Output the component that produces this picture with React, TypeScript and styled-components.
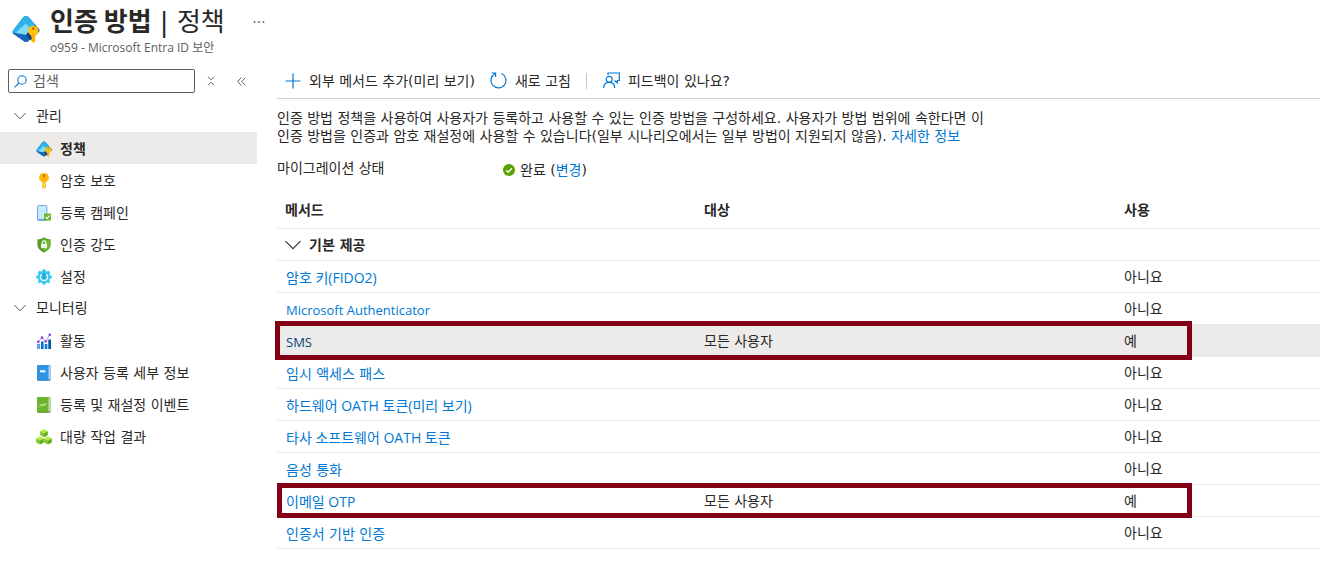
import React, { useState } from 'react';
import styled, { createGlobalStyle, css } from 'styled-components';

const latinFont = "'Open Sans', 'Noto Sans CJK KR', sans-serif";
const koreanFont = "'DejaVu Sans', 'Noto Sans CJK KR', sans-serif";

const GlobalStyle = createGlobalStyle`
  *, *::before, *::after { box-sizing: border-box; }
  body {
    margin: 0;
    background: #ffffff;
    color: #292827;
    font-family: ${koreanFont};
    font-size: 14px;
    line-height: 18px;
    overflow-x: hidden;
  }
  button, input { font: inherit; color: inherit; }
  svg { display: block; flex: none; }
`;

const Page = styled.div`
  display: flex;
  flex-direction: column;
  min-height: 100vh;
`;

const Header = styled.header`
  display: flex;
  align-items: flex-start;
  padding: 4px 12px 0;
  height: 63px;
`;

const HeaderIcon = styled.div`
  padding-top: 11px;
  width: 38px;
`;

const Title = styled.h1`
  margin: 0;
  font-size: 26px;
  line-height: 32px;
  font-weight: 400;
  white-space: nowrap;

  strong {
    font-weight: 700;
    font-family: 'Noto Sans CJK KR', sans-serif;
  }
`;

const Subtitle = styled.p`
  margin: 0;
  font-family: ${latinFont};
  font-size: 12px;
  line-height: 20px;
  color: #605e5c;
`;

const MoreButton = styled.button`
  display: flex;
  margin-left: 24px;
  padding: 16px 4px;
  border: 0;
  background: none;
`;

const Body = styled.div`
  display: flex;
  gap: 20px;
  flex: 1;
`;

const Sidebar = styled.aside`
  flex: none;
  width: 257px;
`;

const SearchRow = styled.div`
  display: flex;
  align-items: center;
  height: 36px;
  margin-bottom: 1px;
  padding-left: 8px;
`;

const SearchBox = styled.label`
  display: flex;
  align-items: center;
  gap: 6px;
  flex: none;
  width: 187px;
  height: 24px;
  margin-right: 1px;
  padding: 0 5px;
  border: 1px solid #605e5c;
  border-radius: 2px;
`;

const SearchInput = styled.input`
  flex: 1;
  min-width: 0;
  padding: 0;
  border: 0;
  outline: 0;
  background: none;

  &::placeholder { color: #605e5c; opacity: 1; }
`;

const IconButton = styled.button`
  display: flex;
  align-items: center;
  justify-content: center;
  flex: none;
  width: 30px;
  height: 24px;
  padding: 0;
  border: 0;
  background: none;
`;

const NavGroup = styled.button`
  display: flex;
  align-items: center;
  gap: 10px;
  width: 100%;
  height: 32px;
  padding: 0 14px;
  border: 0;
  background: none;
  text-align: left;
`;

const NavList = styled.ul`
  margin: 0;
  padding: 0;
  list-style: none;
`;

const NavLink = styled.a<{ $selected?: boolean }>`
  display: flex;
  align-items: center;
  gap: 8px;
  height: 32px;
  padding: 2px 36px 0;
  color: inherit;
  text-decoration: none;
  white-space: nowrap;
  ${({ $selected }) => $selected && css`
    background: #edebe9;
    font-weight: 700;
  `}
`;

const Main = styled.main`
  flex: 1;
  min-width: 0;
`;

const Toolbar = styled.div`
  display: flex;
  align-items: center;
  height: 36px;
  padding-left: 8px;
  border-bottom: 1px solid #d2d0ce;
`;

const ToolButton = styled.button`
  display: flex;
  align-items: center;
  gap: 8px;
  height: 34px;
  margin-right: 15px;
  padding: 0;
  border: 0;
  background: none;
  white-space: nowrap;
`;

const Divider = styled.span`
  width: 1px;
  height: 16px;
  margin-right: 16px;
  background: #c8c6c4;
`;

const Link = styled.a<{ $active?: boolean }>`
  color: ${({ $active }) => ($active ? '#004578' : '#0078d4')};
  text-decoration: none;
`;

const MethodLink = styled(Link)<{ $script: 'korean' | 'mixed' | 'latin' }>`
  font-family: ${({ $script }) => ($script === 'korean' ? koreanFont : latinFont)};
  font-size: ${({ $script }) => ($script === 'latin' ? '13px' : '14px')};
`;

const Description = styled.p`
  margin: 10px 0 14px;
  max-width: 724px;
  word-break: keep-all;
`;

const Migration = styled.dl`
  display: flex;
  margin: 0;

  dt { width: 226px; }
  dd { display: flex; align-items: center; gap: 5px; margin: 2px 0 0; }
`;

const Table = styled.table`
  width: 100%;
  margin-top: 12px;
  border-spacing: 0;
  table-layout: fixed;
  white-space: nowrap;

  th, td {
    height: 32px;
    padding: 0 8px;
    border-bottom: 1px solid #edebe9;
    text-align: left;
  }
  thead th { height: 38px; }
`;

const MethodCol = styled.col`
  width: 419px;
`;

const TargetCol = styled.col`
  width: 420px;
`;

const Row = styled.tr<{ $active?: boolean }>`
  position: relative;
  background: ${({ $active }) => ($active ? '#edebe9' : 'transparent')};

  && td:first-child { padding: 2px 9px 0; }
`;

const GroupToggle = styled.button`
  display: flex;
  align-items: center;
  gap: 8px;
  padding: 0;
  border: 0;
  background: none;
  font-weight: 700;
`;

const Highlight = styled.span<{ $wide?: boolean }>`
  position: absolute;
  top: ${({ $wide }) => ($wide ? '-4px' : '-2px')};
  bottom: ${({ $wide }) => ($wide ? '-3px' : '-1px')};
  left: ${({ $wide }) => ($wide ? '-2px' : '0')};
  right: 128px;
  border: 5px solid #850017;
  pointer-events: none;
`;

const ChevronDown = ({ size = 12 }: { size?: number }) => (
  <svg width={size} height={size} viewBox="0 0 16 16" fill="none" stroke="#323130" strokeWidth="1.1">
    <path d="M0.5 4.2 8 11.7 15.5 4.2" />
  </svg>
);

const EntraKey = ({ size }: { size: number }) => (
  <svg width={size} height={size} viewBox="0 0 28 28">
    <path d="M14 1C15 1 16 1.5 16.7 2.3L27 14Q28.300 16 26.500 17.500L16 26.200Q14 27.200 12 26.200L1.500 19Q-0.4 17.4 1.2 15.2L11.3 2.3C12 1.5 13 1 14 1Z" fill="#1b4fa3" />
    <path d="M14 1C15 1 16 1.5 16.7 2.3L23 9.800 14 20 2.500 18.500Q-0.2 17.2 1.2 15.2L11.3 2.3C12 1.5 13 1 14 1Z" fill="#2fb4ea" />
    <path d="M14 8.5 19 14.500 14 20 4 17.500Z" fill="#7fdcf7" />
    <path d="M1.5 18.300 14 20 20 23 16 26.2Q14 27.2 12 26.200Z" fill="#1668bd" />
    <path d="M14 20 17.500 15.500 21 24 18 25Z" fill="#133f85" />
    <circle cx="21.3" cy="15.800" r="5.2" fill="#ffc20e" />
    <path d="M19.2 19h4v7.2L21.3 28l-2.1-2v-1.6l1-1-1-1Z" fill="#ffb000" />
    <circle cx="21.3" cy="13.6" r="1.4" fill="#b86a00" />
  </svg>
);

const KeyIcon = () => (
  <svg width="16" height="16" viewBox="0 0 16 16">
    <path d="M8 0C11 0 12.9 1.8 12.9 4.8 12.9 6.8 11.6 8.2 9.9 9.1V14.3L8 16 6.1 14.2V13L7 12.1 6.1 11.2 7 10.2 6.1 9.2C4.3 8.2 3.1 6.8 3.1 4.8 3.1 1.8 5 0 8 0Z" fill="#ffb916" />
    <path d="M8 9.5h1v4.8l-1 1Z" fill="#ffe27a" />
    <circle cx="8" cy="2.7" r="1.2" fill="#b86a00" />
    <path d="M5 5.7h6" stroke="#f79d00" />
  </svg>
);

const DeviceIcon = () => (
  <svg width="16" height="16" viewBox="0 0 16 16">
    <rect x="1.5" y="0.5" width="9.4" height="15" rx="1" fill="#c9e9fc" stroke="#6fa9e2" />
    <path d="M2 14.5h8" stroke="#6fa9e2" />
    <rect x="8" y="8.5" width="7" height="7" rx="0.7" fill="#6bb82b" />
    <path d="m9.7 12 1.4 1.4 2.5-2.7" fill="none" stroke="#fff" strokeWidth="1.1" />
  </svg>
);

const ShieldIcon = () => (
  <svg width="16" height="16" viewBox="0 0 16 16">
    <path d="M8 0.3C10 1.8 12 2.3 14.6 2.3V7.6C14.6 11.7 11 14.2 8 15.8 5 14.2 1.4 11.7 1.4 7.6V2.3C4 2.3 6 1.8 8 0.3Z" fill="#579f24" />
    <path d="M8 1.5C9.8 2.7 11.5 3.2 13.6 3.3V7.6C13.6 11 11 13 8 14.6Z" fill="#70bd34" />
    <rect x="5" y="6.7" width="6" height="4.5" rx="0.6" fill="#f2f9ec" />
    <path d="M6.2 7V5.7a1.8 1.8 0 0 1 3.6 0V7" fill="none" stroke="#f2f9ec" strokeWidth="1.1" />
  </svg>
);

const GearIcon = () => (
  <svg width="16" height="16" viewBox="0 0 16 16">
    <g fill="#32c7ee">
      <circle cx="8" cy="8" r="6.2" />
      {[0, 45, 90, 135].map((a) => (
        <rect key={a} x="6.5" y="0.3" width="3" height="15.4" rx="0.6" transform={`rotate(${a} 8 8)`} />
      ))}
    </g>
    <path d="M5.600 5.200A3.700 3.700 0 1 0 10.400 5.200" fill="none" stroke="#e8f9fe" strokeWidth="1.300" />
    <path d="M8 4v3.500" stroke="#198ab3" strokeWidth="1.300" />
    <circle cx="8" cy="8.500" r="1.600" fill="#1fa8d2" />
  </svg>
);

const ActivityIcon = () => (
  <svg width="16" height="16" viewBox="0 0 16 16">
    <path d="M1 11h3v5H1z" fill="#5ea0ef" />
    <path d="M5 8.5h2.6V16H5z" fill="#0a6cc4" />
    <path d="M8.7 11h2.6v5H8.7z" fill="#0078d4" />
    <path d="M12.3 6.5H15V16h-2.7z" fill="#005a9e" />
    <path d="M2.3 8.8 6 4.7 9.8 8.3 13.8 2" fill="none" stroke="#b796f9" strokeWidth="1" />
    <g fill="#8a4be0">
      <circle cx="2.3" cy="8.8" r="1.4" />
      <circle cx="6" cy="4.7" r="1.4" />
      <circle cx="9.8" cy="8.3" r="1.4" />
      <circle cx="13.8" cy="1.8" r="1.4" />
    </g>
  </svg>
);

const BookIcon = ({ green }: { green?: boolean }) => (
  <svg width="16" height="16" viewBox="0 0 16 16">
    <rect x="1" y="0.3" width="13.5" height="15.4" rx="1" fill={green ? '#4f8f22' : '#1b75bd'} />
    <path d="M12 0.800h2.300v13.700H12z" fill={green ? '#c5dfae' : '#b5d7f2'} />
    <path d="M1 1.3Q1 .3 2 .3h10.500v14.500H1z" fill={green ? '#6cb52d' : '#2f94e4'} />
    {green
      ? <path d="m3 9.700 2.500-2.500.3 2 2.200-2.500.300 2 2.500-2.500" fill="none" stroke="#d9f5bd" strokeWidth="0.9" />
      : <path d="M4 5.3h5.5v2H4z" fill="#fff" />}
  </svg>
);

const Cube = ({ x, y }: { x: number; y: number }) => (
  <g transform={`translate(${x} ${y})`}>
    <path d="M4 0 7.8 2 4 4 .2 2Z" fill="#b4ec36" />
    <path d="M.2 2 4 4v4L.2 6Z" fill="#7fc92b" />
    <path d="M7.8 2 4 4v4l3.8-2Z" fill="#66ab1f" />
  </g>
);

const CubesIcon = () => (
  <svg width="16" height="16" viewBox="0 0 16 16">
    <Cube x={4} y={0.3} />
    <Cube x={0} y={7.5} />
    <Cube x={8} y={7.5} />
  </svg>
);

type NavItem = { label: string; icon: React.ReactNode; selected?: boolean };

const manageItems: NavItem[] = [
  { label: '정책', icon: <EntraKey size={16} />, selected: true },
  { label: '암호 보호', icon: <KeyIcon /> },
  { label: '등록 캠페인', icon: <DeviceIcon /> },
  { label: '인증 강도', icon: <ShieldIcon /> },
  { label: '설정', icon: <GearIcon /> },
];

const monitorItems: NavItem[] = [
  { label: '활동', icon: <ActivityIcon /> },
  { label: '사용자 등록 세부 정보', icon: <BookIcon /> },
  { label: '등록 및 재설정 이벤트', icon: <BookIcon green /> },
  { label: '대량 작업 결과', icon: <CubesIcon /> },
];

type Method = { name: string; target?: string; enabled: string; active?: boolean; marked?: boolean };

const methods: Method[] = [
  { name: '암호 키(FIDO2)', enabled: '아니요' },
  { name: 'Microsoft Authenticator', enabled: '아니요' },
  { name: 'SMS', target: '모든 사용자', enabled: '예', active: true, marked: true },
  { name: '임시 액세스 패스', enabled: '아니요' },
  { name: '하드웨어 OATH 토큰(미리 보기)', enabled: '아니요' },
  { name: '타사 소프트웨어 OATH 토큰', enabled: '아니요' },
  { name: '음성 통화', enabled: '아니요' },
  { name: '이메일 OTP', target: '모든 사용자', enabled: '예', marked: true },
  { name: '인증서 기반 인증', enabled: '아니요' },
];

const scriptOf = (text: string) => {
  if (!/[A-Za-z]/.test(text)) return 'korean';
  return /[가-힣]/.test(text) ? 'mixed' : 'latin';
};

function NavSection({ title, items }: { title: string; items: NavItem[] }) {
  const [open, setOpen] = useState(true);
  return (
    <>
      <NavGroup type="button" aria-expanded={open} onClick={() => setOpen(!open)}>
        <ChevronDown />
        {title}
      </NavGroup>
      {open && (
        <NavList>
          {items.map((item) => (
            <li key={item.label}>
              <NavLink href="#" $selected={item.selected} aria-current={item.selected ? 'page' : undefined}>
                {item.icon}
                {item.label}
              </NavLink>
            </li>
          ))}
        </NavList>
      )}
    </>
  );
}

export default function App() {
  const [open, setOpen] = useState(true);
  return (
    <Page>
      <GlobalStyle />
      <Header>
        <HeaderIcon><EntraKey size={28} /></HeaderIcon>
        <div>
          <Title><strong>인증 방법</strong> | 정책</Title>
          <Subtitle>o959 - Microsoft Entra ID 보안</Subtitle>
        </div>
        <MoreButton type="button" aria-label="더 보기">
          <svg width="12" height="4" viewBox="0 0 12 4" fill="#605e5c">
            <circle cx="1.5" cy="2" r="0.9" />
            <circle cx="6" cy="2" r="0.9" />
            <circle cx="10.5" cy="2" r="0.9" />
          </svg>
        </MoreButton>
      </Header>
      <Body>
        <Sidebar>
          <SearchRow>
            <SearchBox>
              <svg width="13" height="13" viewBox="0 0 13 13" fill="none" stroke="#0078d4" strokeWidth="1.1">
                <circle cx="8" cy="5" r="4.2" />
                <path d="M5 8 .6 12.4" />
              </svg>
              <SearchInput type="text" placeholder="검색" aria-label="검색" />
            </SearchBox>
            <IconButton type="button" aria-label="모두 축소">
              <svg width="8" height="10" viewBox="0 0 8 10" fill="none" stroke="#605e5c">
                <path d="M1 .8 4 3.8 7 .8M1 9.2 4 6.2 7 9.2" />
              </svg>
            </IconButton>
            <IconButton type="button" aria-label="메뉴 접기">
              <svg width="9" height="9" viewBox="0 0 9 9" fill="none" stroke="#605e5c">
                <path d="M4.3 .6.7 4.5 4.3 8.4M8.3 .6 4.7 4.5 8.3 8.4" />
              </svg>
            </IconButton>
          </SearchRow>
          <nav>
            <NavSection title="관리" items={manageItems} />
            <NavSection title="모니터링" items={monitorItems} />
          </nav>
        </Sidebar>
        <Main>
          <Toolbar>
            <ToolButton type="button">
              <svg width="16" height="16" viewBox="0 0 16 16" stroke="#0078d4" strokeWidth="1.2">
                <path d="M8 .5v15M.5 8h15" />
              </svg>
              외부 메서드 추가(미리 보기)
            </ToolButton>
            <ToolButton type="button">
              <svg width="17" height="17" viewBox="0 0 17 17" fill="none" stroke="#0078d4" strokeWidth="1.2">
                <path d="M11.500 1.500A7.500 7.500 0 1 1 5 1.700M1.600 1h4v4" />
              </svg>
              새로 고침
            </ToolButton>
            <Divider />
            <ToolButton type="button">
              <svg width="17" height="17" viewBox="0 0 17 17" fill="none" stroke="#0078d4" strokeWidth="1.2">
                <path d="M5 3V1h11.300v7.500h-2v2.500L11.500 8.500" />
                <circle cx="6.200" cy="7.300" r="3" />
                <path d="M.7 16C.7 12.500 3 10.400 6.200 10.400S11.700 12.500 11.700 16" />
              </svg>
              피드백이 있나요?
            </ToolButton>
          </Toolbar>
          <Description>
            인증 방법 정책을 사용하여 사용자가 등록하고 사용할 수 있는 인증 방법을 구성하세요. 사용자가 방법 범위에 속한다면 이 인증 방법을 인증과 암호 재설정에 사용할 수 있습니다(일부 시나리오에서는 일부 방법이 지원되지 않음).{' '}
            <Link href="#">자세한 정보</Link>
          </Description>
          <Migration>
            <dt>마이그레이션 상태</dt>
            <dd>
              <svg width="12" height="12" viewBox="0 0 12 12">
                <circle cx="6" cy="6" r="6" fill="#57a300" />
                <path d="m3.2 6.2 2 2 3.7-4" fill="none" stroke="#fff" strokeWidth="1.4" />
              </svg>
              <span>완료 (<Link href="#">변경</Link>)</span>
            </dd>
          </Migration>
          <Table>
            <colgroup>
              <MethodCol />
              <TargetCol />
              <col />
            </colgroup>
            <thead>
              <tr>
                <th scope="col">메서드</th>
                <th scope="col">대상</th>
                <th scope="col">사용</th>
              </tr>
            </thead>
            <tbody>
              <tr>
                <td colSpan={3}>
                  <GroupToggle type="button" aria-expanded={open} onClick={() => setOpen(!open)}>
                    <ChevronDown size={16} />
                    기본 제공
                  </GroupToggle>
                </td>
              </tr>
              {open && methods.map((m) => (
                <Row key={m.name} $active={m.active}>
                  <td>
                    <MethodLink href="#" $active={m.active} $script={scriptOf(m.name)}>{m.name}</MethodLink>
                    {m.marked && <Highlight $wide={m.active} />}
                  </td>
                  <td>{m.target}</td>
                  <td>{m.enabled}</td>
                </Row>
              ))}
            </tbody>
          </Table>
        </Main>
      </Body>
    </Page>
  );
}
